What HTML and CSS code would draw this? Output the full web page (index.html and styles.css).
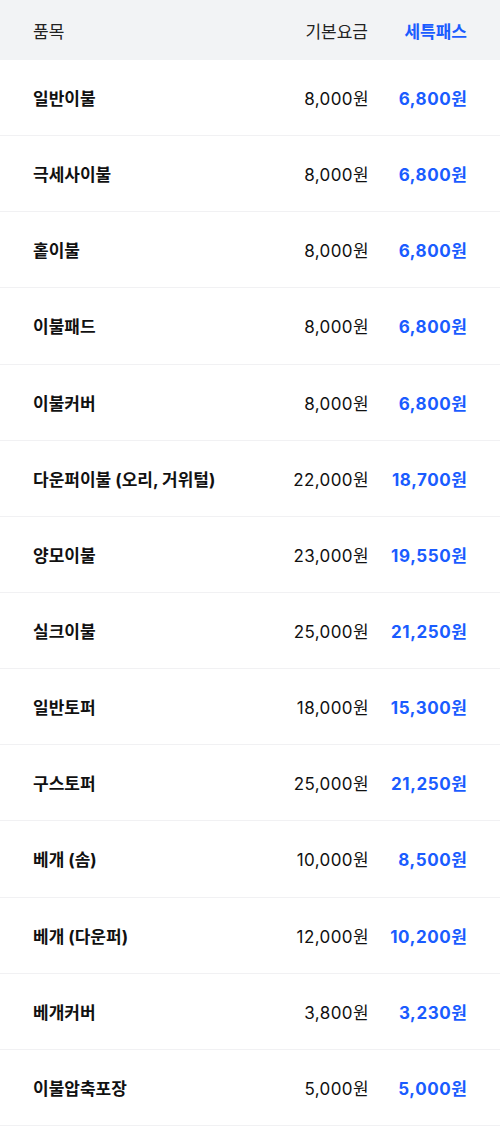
FILE: index.html
```html
<!DOCTYPE html>
<html lang="ko">
<head>
    <meta charset="UTF-8">
    <meta name="viewport" content="width=device-width, initial-scale=1.0">
    <title>세특패스 요금표</title>
    <link rel="stylesheet" href="styles.css">
</head>
<body>
    <div class="price-table">
        <div class="row head">
            <div class="name">품목</div>
            <div class="base">기본요금</div>
            <div class="pass">세특패스</div>
        </div>
        <div class="row"><div class="name">일반이불</div><div class="base">8,000원</div><div class="pass">6,800원</div></div>
        <div class="row"><div class="name">극세사이불</div><div class="base">8,000원</div><div class="pass">6,800원</div></div>
        <div class="row"><div class="name">홑이불</div><div class="base">8,000원</div><div class="pass">6,800원</div></div>
        <div class="row"><div class="name">이불패드</div><div class="base">8,000원</div><div class="pass">6,800원</div></div>
        <div class="row"><div class="name">이불커버</div><div class="base">8,000원</div><div class="pass">6,800원</div></div>
        <div class="row"><div class="name">다운퍼이불 (오리, 거위털)</div><div class="base">22,000원</div><div class="pass">18,700원</div></div>
        <div class="row"><div class="name">양모이불</div><div class="base">23,000원</div><div class="pass">19,550원</div></div>
        <div class="row"><div class="name">실크이불</div><div class="base">25,000원</div><div class="pass">21,250원</div></div>
        <div class="row"><div class="name">일반토퍼</div><div class="base">18,000원</div><div class="pass">15,300원</div></div>
        <div class="row"><div class="name">구스토퍼</div><div class="base">25,000원</div><div class="pass">21,250원</div></div>
        <div class="row"><div class="name">베개 (솜)</div><div class="base">10,000원</div><div class="pass">8,500원</div></div>
        <div class="row"><div class="name">베개 (다운퍼)</div><div class="base">12,000원</div><div class="pass">10,200원</div></div>
        <div class="row"><div class="name">베개커버</div><div class="base">3,800원</div><div class="pass">3,230원</div></div>
        <div class="row"><div class="name">이불압축포장</div><div class="base">5,000원</div><div class="pass">5,000원</div></div>
    </div>
</body>
</html>
```

FILE: styles.css
```css
body {
    margin: 0;
    font-family: Inter, "Noto Sans CJK KR", sans-serif;
    color: #111;
    background: #fff;
}
.price-table { width: 500px; }
.row {
    display: flex;
    align-items: center;
    height: 75.15px;
    padding: 0 33px;
    border-bottom: 1px solid #f1f1f3;
    font-size: 17px;
}
.row.head {
    height: 60px;
    border-bottom: none;
    background: #f2f3f5;
}
.name { flex: 1; font-weight: 700; }
.base {
    text-align: right;
    color: #111;
    letter-spacing: 0.4px;
    margin-right: -0.4px;
}
.pass {
    width: 99px;
    text-align: right;
    font-weight: 700;
    color: #1a5cff;
    letter-spacing: 0.6px;
    margin-right: -0.6px;
}
.head .name { font-weight: 400; color: #222; }
.head .base { color: #222; letter-spacing: 0; margin-right: 0; }
.head .pass { font-weight: 600; letter-spacing: 0; margin-right: 0; }
```
